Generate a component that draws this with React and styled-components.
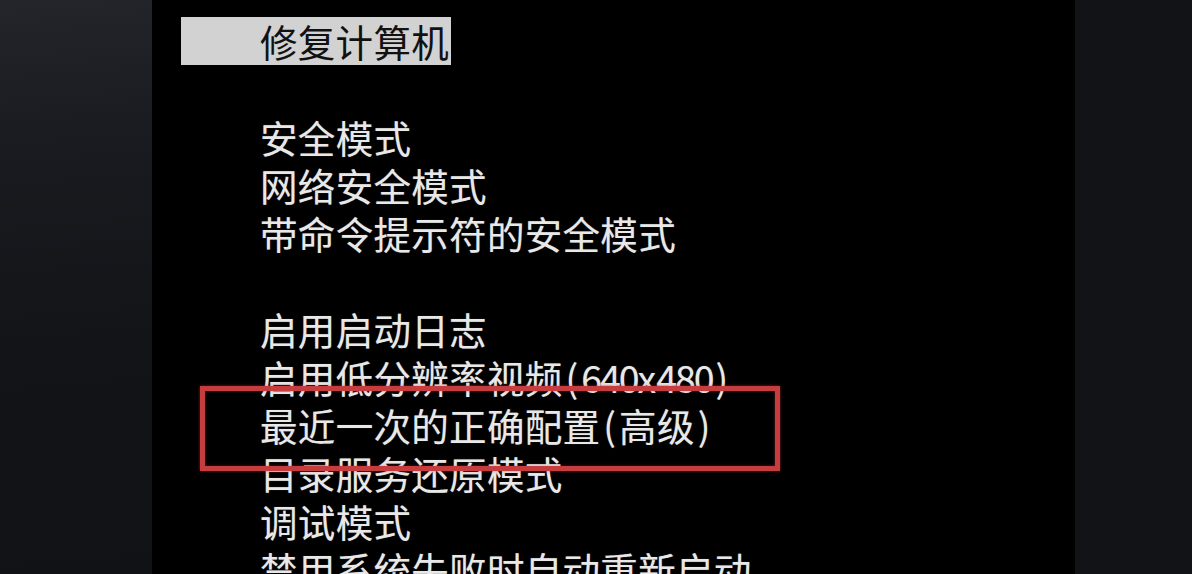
import React from "react";
import styled, { createGlobalStyle } from "styled-components";

const Global = createGlobalStyle`
  html, body { margin: 0; padding: 0; background: #000; }
  body { width: 1192px; height: 574px; overflow: hidden; }
  #root { height: 574px; }
`;

const Page = styled.div`
  display: flex;
  width: 1192px;
  height: 574px;
  overflow: hidden;
  font-family: "Noto Sans CJK SC", "Noto Sans", sans-serif;
`;

const SidePanel = styled.div`
  flex: 0 0 ${(p) => p.$w}px;
  background: ${(p) => p.$bg};
`;

const Screen = styled.div`
  position: relative;
  flex: 1;
  background: #000;
  padding: 17px 0 0 29px;
  display: flex;
  flex-direction: column;
  align-items: flex-start;
  overflow: hidden;
`;

const Row = styled.div`
  flex-shrink: 0;
  font-size: 37.5px;
  line-height: 48px;
  height: 48px;
  white-space: nowrap;
  letter-spacing: 0.3px;
`;

const Title = styled(Row)`
  background: #d2d2d2;
  color: #111;
  padding: 0 2px 0 79px;
`;

const Item = styled(Row)`
  color: #e8e8e8;
  padding-left: 79px;
  text-shadow: 0 0 1px rgba(255, 255, 255, 0.35);
`;

const Half = styled.span`
  display: inline-block;
  width: 0.5em;
  text-align: center;
  letter-spacing: 0;
`;

const Blank = styled.div`
  flex-shrink: 0;
  height: 48px;
`;

const Highlight = styled.div`
  position: absolute;
  left: 48px;
  top: 386px;
  width: 580px;
  height: 85px;
  box-sizing: border-box;
  border: 5px solid #c53d3e;
  box-shadow: 0 0 3px rgba(200, 60, 60, 0.6), inset 0 0 3px rgba(200, 60, 60, 0.5);
  pointer-events: none;
`;

function Text({ children }) {
  return Array.from(children).map((ch, i) =>
    ch.charCodeAt(0) < 128 ? <Half key={i}>{ch}</Half> : ch
  );
}

const groupA = ["安全模式", "网络安全模式", "带命令提示符的安全模式"];
const groupB = [
  "启用启动日志",
  "启用低分辨率视频(640x480)",
  "最近一次的正确配置(高级)",
  "目录服务还原模式",
  "调试模式",
  "禁用系统失败时自动重新启动",
];

export default function App() {
  return (
    <>
      <Global />
      <Page>
        <SidePanel
          $w={152}
          $bg="linear-gradient(175deg, #24252a 0%, #1a1b20 25%, #131418 60%, #111216 100%)"
        />
        <Screen>
          <Title>修复计算机</Title>
          <Blank />
          {groupA.map((t) => (
            <Item key={t}>
              <Text>{t}</Text>
            </Item>
          ))}
          <Blank />
          {groupB.map((t) => (
            <Item key={t}>
              <Text>{t}</Text>
            </Item>
          ))}
          <Highlight />
        </Screen>
        <SidePanel $w={117} $bg="#121317" />
      </Page>
    </>
  );
}
